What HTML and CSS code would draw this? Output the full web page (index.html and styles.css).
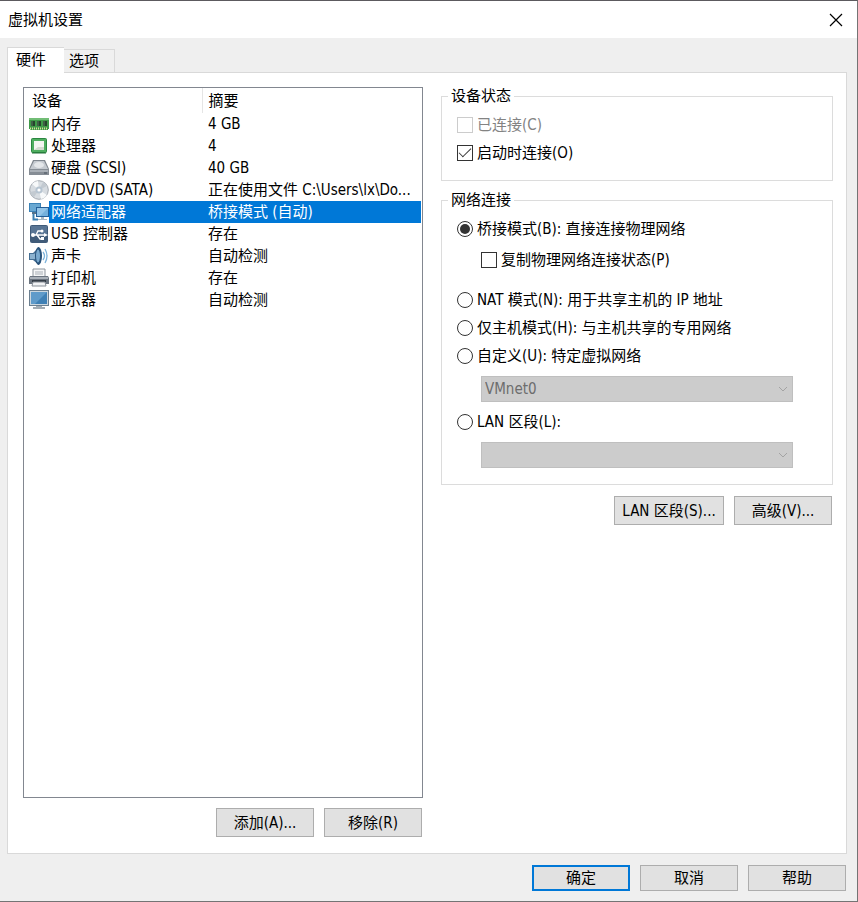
FILE: index.html
```html
<!DOCTYPE html>
<html lang="zh-CN">
<head>
    <meta charset="UTF-8">
    <meta name="viewport" content="width=device-width, initial-scale=1.0">
    <title>虚拟机设置</title>
    <link rel="stylesheet" href="styles.css">
</head>
<body>
    <div class="window">
        <header class="titlebar">
            <h1>虚拟机设置</h1>
            <button type="button" class="close" aria-label="关闭">
                <svg width="14" height="14" viewBox="0 0 14 14"><path d="M1 1L13 13M13 1L1 13" stroke="#000" stroke-width="1.2" fill="none"/></svg>
            </button>
        </header>

        <div class="tabs" role="tablist">
            <button type="button" role="tab" class="tab active" aria-selected="true">硬件</button>
            <button type="button" role="tab" class="tab" aria-selected="false">选项</button>
        </div>

        <main class="panel">
            <section class="devices">
                <div class="list">
                    <table>
                        <colgroup>
                            <col class="col-icon">
                            <col class="col-name">
                            <col>
                        </colgroup>
                        <thead>
                            <tr><th colspan="2">设备</th><th class="summary">摘要</th></tr>
                        </thead>
                        <tbody>
                            <tr>
                                <td class="icon"><svg viewBox="0 0 20 20"><path d="M0 4h20v11h-1v1H1v-1H0z" fill="#3f9a48"/><path d="M0 4h20v2H0z" fill="#72bd76"/><path d="M2 7h4v5H2zM8 7h4v5H8zM14 7h4v5h-4z" fill="#24452b"/><path d="M3 7v5M9 7v5M15 7v5" stroke="#5a7a60"/><path d="M1 14.5h18" stroke="#d6dc9a" stroke-width="2" stroke-dasharray="1 1"/></svg></td>
                                <td>内存</td><td class="summary">4 GB</td>
                            </tr>
                            <tr>
                                <td class="icon"><svg viewBox="0 0 20 20"><rect x="2.500" y="2.500" width="15" height="14" rx="1" fill="#4fae60" stroke="#2c8741"/><path d="M5 5h10v9H5z" fill="#f3f5f1"/><path d="M5 14l4-3h6v3z" fill="#d3dad0"/><path d="M3 17h14" stroke="#237238"/></svg></td>
                                <td>处理器</td><td class="summary">4</td>
                            </tr>
                            <tr>
                                <td class="icon"><svg viewBox="0 0 20 20"><path d="M4 2h12l4 9v6H0v-6z" fill="#7f868e"/><path d="M5 3h10l4 8H1z" fill="#c5cad0"/><ellipse cx="10" cy="7" rx="5" ry="3" fill="#e4e7ea"/><path d="M0 11h20v6H0z" fill="#868d95"/><path d="M1 12h18v2H1z" fill="#aab0b7"/><path d="M15 15h3" stroke="#46505c"/></svg></td>
                                <td>硬盘 (SCSI)</td><td class="summary">40 GB</td>
                            </tr>
                            <tr>
                                <td class="icon"><svg viewBox="0 0 20 20"><circle cx="10" cy="10" r="9.300" fill="#d7dce1" stroke="#a4aab1"/><path d="M10 10L3 4a9 9 0 0 1 6-3zM10 10l8 5a9 9 0 0 1-6 4z" fill="#f7f9fa"/><path d="M10 10L1 12a9 9 0 0 0 4 5zM10 10l8-4a9 9 0 0 0-4-4z" fill="#c3cad1"/><circle cx="10" cy="10" r="3.500" fill="#b6c4d1"/><circle cx="10" cy="10" r="1.600" fill="#fff"/></svg></td>
                                <td>CD/DVD (SATA)</td><td class="summary">正在使用文件 C:\Users\lx\Do...</td>
                            </tr>
                            <tr class="selected">
                                <td class="icon"><svg viewBox="0 0 20 20"><path d="M0 1h12v9H0z" fill="#3c83b7"/><path d="M1 2h10v7H1z" fill="#69a8d2"/><path d="M3 10h5v2H3z" fill="#55738b"/><path d="M4.500 12v5.500H9" stroke="#3b80b2" stroke-width="2" fill="none"/><path d="M7 5h13v10H7z" fill="#245f98"/><path d="M8 6h11v8H8z" fill="#75b1dc"/><path d="M8 6h11l-8 8H8z" fill="#94c5e8"/><path d="M12 15h3v2h3v1H9v-1h3z" fill="#aab9c4"/></svg></td>
                                <td>网络适配器</td><td class="summary">桥接模式 (自动)</td>
                            </tr>
                            <tr>
                                <td class="icon"><svg viewBox="0 0 20 20"><rect x="1" y="1" width="18" height="18" rx="2" fill="#405b79"/><path d="M2 2h16v8H2z" fill="#597594"/><path d="M4 11h12M7 11l2-4h4M8 11l3 4h2" stroke="#fff" stroke-width="1.300" fill="none"/><circle cx="4" cy="11" r="2" fill="#fff"/><circle cx="13" cy="7" r="1.500" fill="#fff"/><path d="M15 9l4 2-4 2zM12 13h3v3h-3z" fill="#fff"/></svg></td>
                                <td>USB 控制器</td><td class="summary">存在</td>
                            </tr>
                            <tr>
                                <td class="icon"><svg viewBox="0 0 20 20"><path d="M0 7h4l6-6v18l-6-5H0z" fill="#456f94"/><path d="M1 8h4l3-3v8H1z" fill="#8cb2cf"/><ellipse cx="9.500" cy="10" rx="3.500" ry="9" fill="#29537b"/><ellipse cx="9" cy="10" rx="2" ry="6.500" fill="#79a9ce"/><path d="M14 6q3 4 0 8M16 3q4 7 0 14" stroke="#7fb4dc" stroke-width="1.300" fill="none"/></svg></td>
                                <td>声卡</td><td class="summary">自动检测</td>
                            </tr>
                            <tr>
                                <td class="icon"><svg viewBox="0 0 20 20"><path d="M4 1h12v8H4z" fill="#f5f6f7" stroke="#8d949c"/><path d="M6 4h8M6 6h8" stroke="#a9afb6"/><path d="M1 8h18l1 2v6H0v-6z" fill="#6c7580"/><path d="M1 9h18v2H1z" fill="#aab1b9"/><path d="M3 12h14v2H3z" fill="#343c46"/><path d="M4 14h12l1 4H3z" fill="#f2f3f5" stroke="#878e96"/></svg></td>
                                <td>打印机</td><td class="summary">存在</td>
                            </tr>
                            <tr>
                                <td class="icon"><svg viewBox="0 0 20 20"><path d="M0 0h20v16H0z" fill="#6b7f90"/><path d="M1 1h18v14H1z" fill="#cbd7df"/><path d="M2 2h16v12H2z" fill="#3f80b5"/><path d="M2 2h16L6 14H2z" fill="#5f9bca"/><path d="M7 16h6v1h3v2H4v-2h3z" fill="#a2acb4"/></svg></td>
                                <td>显示器</td><td class="summary">自动检测</td>
                            </tr>
                        </tbody>
                    </table>
                </div>
                <div class="actions">
                    <button type="button" class="btn">添加(A)...</button>
                    <button type="button" class="btn">移除(R)</button>
                </div>
            </section>

            <form class="settings" id="network-form">
                <fieldset class="status">
                    <legend>设备状态</legend>
                    <div class="option disabled">
                        <input type="checkbox" id="connected" disabled>
                        <label for="connected">已连接(C)</label>
                    </div>
                    <div class="option">
                        <input type="checkbox" id="connect-on-start" checked>
                        <label for="connect-on-start">启动时连接(O)</label>
                    </div>
                </fieldset>

                <fieldset class="network">
                    <legend>网络连接</legend>
                    <div class="option">
                        <input type="radio" name="network" id="bridged" checked>
                        <label for="bridged">桥接模式(B): 直接连接物理网络</label>
                    </div>
                    <div class="option sub">
                        <input type="checkbox" id="replicate">
                        <label for="replicate">复制物理网络连接状态(P)</label>
                    </div>
                    <div class="option nat">
                        <input type="radio" name="network" id="nat">
                        <label for="nat">NAT 模式(N): 用于共享主机的 IP 地址</label>
                    </div>
                    <div class="option">
                        <input type="radio" name="network" id="host-only">
                        <label for="host-only">仅主机模式(H): 与主机共享的专用网络</label>
                    </div>
                    <div class="option">
                        <input type="radio" name="network" id="custom">
                        <label for="custom" id="custom-label">自定义(U): 特定虚拟网络</label>
                    </div>
                    <div class="dropdown">
                        <select aria-labelledby="custom-label" disabled><option>VMnet0</option></select>
                        <svg width="10" height="6" viewBox="0 0 10 6"><path d="M1 1l4 4 4-4" stroke="#a3a3a3" fill="none"/></svg>
                    </div>
                    <div class="option">
                        <input type="radio" name="network" id="lan">
                        <label for="lan" id="lan-label">LAN 区段(L):</label>
                    </div>
                    <div class="dropdown">
                        <select aria-labelledby="lan-label" disabled><option></option></select>
                        <svg width="10" height="6" viewBox="0 0 10 6"><path d="M1 1l4 4 4-4" stroke="#a3a3a3" fill="none"/></svg>
                    </div>
                </fieldset>

                <div class="actions">
                    <button type="button" class="btn wide">LAN 区段(S)...</button>
                    <button type="button" class="btn">高级(V)...</button>
                </div>
            </form>
        </main>

        <footer class="footer">
            <button type="button" class="btn default">确定</button>
            <button type="button" class="btn">取消</button>
            <button type="button" class="btn">帮助</button>
        </footer>
    </div>
</body>
</html>
```
FILE: styles.css
```css
* { box-sizing: border-box; }
body { margin: 0; background: #efefef; color: #000; }
body, button, select { font-family: "DejaVu Sans Condensed", "Noto Sans CJK SC", sans-serif; font-size: 15px; line-height: 20px; }

.window { display: flex; flex-direction: column; min-height: 100vh; border: 1px solid #747474; border-top-color: #5c5a5e; border-left: 0; }

.titlebar { display: flex; align-items: center; justify-content: space-between; height: 37px; padding-left: 8px; background: #fff; }
.titlebar h1 { margin: 0; font-size: 15px; font-weight: normal; }
.close { display: flex; align-items: center; justify-content: center; width: 42px; height: 36px; padding: 0; border: 0; background: none; }

.tabs { display: flex; align-items: flex-end; height: 34px; padding-left: 7px; }
.tab { height: 23px; padding: 0 15px 0 5px; border: 1px solid #d9d9d9; border-left: 0; border-bottom: 0; background: #f0f0f0; }
.tab.active { position: relative; z-index: 1; height: 26px; margin-bottom: -1px; padding: 0 18px 2px 8px; border-left: 1px solid #d9d9d9; border-right: 0; background: #fff; }

.panel { flex: 1; display: grid; grid-template-columns: 400fr 392fr; gap: 18px; margin: 0 10px 0 7px; padding: 14px 13px 16px 15px; border: 1px solid #d9d9d9; background: #fff; }

.devices { display: flex; flex-direction: column; min-width: 0; }
.list { flex: 1; padding-right: 1px; border: 1px solid #828790; }
.list table { width: 100%; table-layout: fixed; border-collapse: collapse; }
.col-icon { width: 25px; }
.col-name { width: 153px; }
.list th { height: 25px; padding: 0 0 0 8px; font-weight: normal; text-align: left; }
.list td { height: 22px; padding: 0 2px; white-space: nowrap; }
.list .summary { padding: 0 0 0 6px; }
.list th.summary { border-left: 1px solid #e5e5e5; }
.list .icon { padding: 0 0 0 5px; background: #fff; }
.icon svg { display: block; width: 20px; height: 20px; }
.selected { background: #0078d7; color: #fff; }

.actions { display: flex; justify-content: flex-end; gap: 10px; margin-top: 10px; padding-right: 1px; }
.btn { min-width: 98px; height: 29px; padding: 0 5px; border: 1px solid #adadad; background: #e1e1e1; color: #000; }
.btn.wide { min-width: 110px; }

.settings { min-width: 0; }
fieldset { min-width: 0; margin: 0; padding: 5px 6px 13px; border: 1px solid #dcdcdc; }
legend { padding: 0 3px; line-height: 20px; }
.status { margin-top: -1px; }
.network { margin-top: 9px; padding-bottom: 16px; }
.settings .actions { margin-top: 11px; }

.option { display: flex; align-items: center; gap: 4px; height: 28px; padding-left: 9px; white-space: nowrap; }
.option.disabled { color: #838383; }
.option.sub { margin-top: 3px; padding-left: 33px; }
.option.nat { margin-top: 12px; }
.option input { appearance: none; flex: none; display: grid; place-items: center; width: 16px; height: 16px; margin: 0; border: 1px solid #333; background: #fff; }
.option input:disabled { border-color: #ccc; }
.option input[type=checkbox]:checked::before { content: ""; width: 11px; height: 5px; margin-bottom: 4px; border: solid #333; border-width: 0 0 1px 1px; transform: rotate(-45deg); }
.option input[type=radio] { border-radius: 50%; }
.option input[type=radio]:checked::before { content: ""; width: 10px; height: 10px; border-radius: 50%; background: #333; }

.dropdown { position: relative; margin: 6px 33px 6px 33px; }
.dropdown select { appearance: none; display: block; width: 100%; height: 26px; padding: 0 20px 0 3px; border: 1px solid #bfbfbf; border-radius: 0; background: #ccc; color: #6d6d6d; opacity: 1; }
.dropdown svg { position: absolute; right: 5px; top: 10px; }
.dropdown:last-child { margin-bottom: 0; }

.footer { display: flex; justify-content: flex-end; gap: 10px; padding: 11px 11px 10px; }
.footer .btn { height: 26px; }
.btn.default { border: 2px solid #0078d7; }
```
